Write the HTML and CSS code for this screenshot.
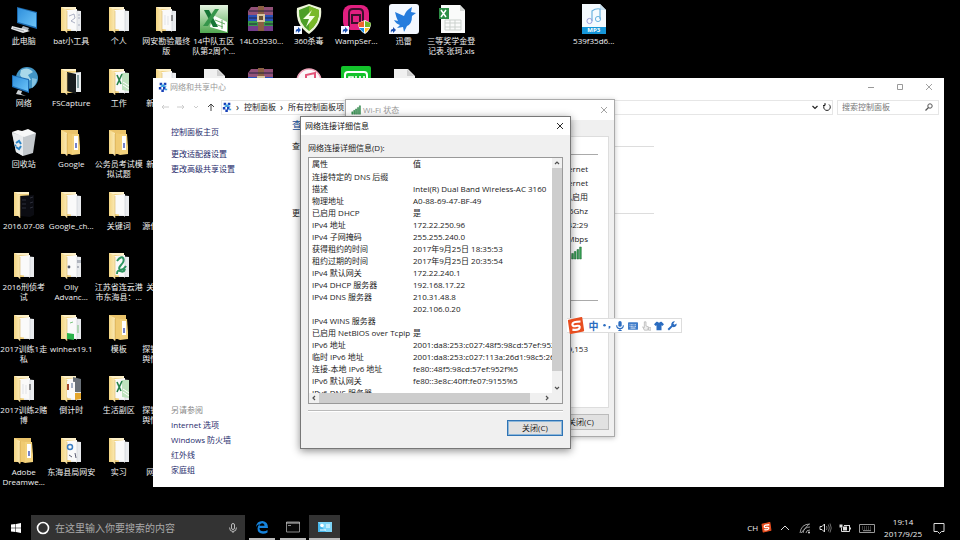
FILE: index.html
```html
<!DOCTYPE html>
<html lang="zh-CN">
<head>
<meta charset="utf-8">
<title>网络连接详细信息</title>
<link rel="stylesheet" href="styles.css">
</head>
<body>
<svg class="sprite" aria-hidden="true">
  <defs>
    <linearGradient id="g-folder" x1="0" x2="1"><stop offset="0" stop-color="#f3d583"/><stop offset="1" stop-color="#fbe9b3"/></linearGradient>
    <linearGradient id="g-blue" x1="0" x2="1" y2="1"><stop offset="0" stop-color="#2f8fdc"/><stop offset="1" stop-color="#6cc4f8"/></linearGradient>
    <linearGradient id="g-green" x1="0" x2="0" y2="1"><stop offset="0" stop-color="#e4f3e0"/><stop offset="1" stop-color="#4fa64f"/></linearGradient>
  </defs>
  <symbol id="folder-back" viewBox="0 0 32 32"><path d="M6 4h15v24H6z" fill="#f0d07c"/><path d="M7 4h14v2H7z" fill="#fdf0c8"/></symbol>
  <symbol id="folder-front" viewBox="0 0 32 32"><path d="M6 4l6 3v23l-2-2-4-1z" fill="url(#g-folder)"/><path d="M12 8v22" stroke="#d9b765" stroke-width=".6"/></symbol>
  <symbol id="folder" viewBox="0 0 32 32"><use href="#folder-back"/><path d="M16 7l10 1v20l-10 0z" fill="#e9ebee"/><path d="M12 7l10-1v23l-2-2-8-1z" fill="#fafafa"/><path d="M22 8v20" stroke="#c9cdd3" stroke-width=".6"/><use href="#folder-front"/></symbol>
  <symbol id="folder-doc" viewBox="0 0 32 32"><use href="#folder"/><path d="M14 13l5-2 1 4-4 3 4 2M23 12h2m-2 3h2m-2 7h2" stroke="#8d93ad" stroke-width=".7" fill="none"/></symbol>
  <symbol id="folder-text" viewBox="0 0 32 32"><use href="#folder"/><path d="M22 12v6" stroke="#333" stroke-width="1"/><path d="M15 12v10m3-9v9" stroke="#d5d8de" stroke-width=".7"/></symbol>
  <symbol id="folder-dark" viewBox="0 0 32 32"><use href="#folder-back"/><path d="M15 8l11-1v20H15z" fill="#eaeef0"/><path d="M12 7l9 2v20l-9-3z" fill="#161a1c"/><path d="M23 10v13" stroke="#729094" stroke-width="1.6"/><use href="#folder-front"/></symbol>
  <symbol id="folder-black" viewBox="0 0 32 32"><use href="#folder-back"/><path d="M12 8l14-1v20l-4 2-10-1z" fill="#0b0c12"/><path d="M14 12h4m-4 4h4m-4 4h4m4-10l3-1m-3 6l3-1m-3 6l3-1" stroke="#363846" stroke-width=".8"/><use href="#folder-front"/></symbol>
  <symbol id="folder-excel" viewBox="0 0 32 32"><use href="#folder"/><path d="M19 8h7v18l-7-1z" fill="#bfe3bf"/><path d="M14 10l4 9m1-10l-5 11" stroke="#27824a" stroke-width="1.600"/><path d="M20 17l6 4m-6-1l6 4" stroke="#fff" stroke-width="1"/></symbol>
  <symbol id="folder-swirl" viewBox="0 0 32 32"><use href="#folder"/><path d="M14 12c6-8 9-1 4 4s1 7 5 1M14 25c0-8 6 2 8-5" stroke="#2f9561" stroke-width="2" fill="none"/></symbol>
  <symbol id="folder-sub" viewBox="0 0 32 32"><path d="M6 4h17v24H6z" fill="#eac36a"/><path d="M17 8h7l1 13v7l-8 1z" fill="#f3d27c"/><path d="M19 10h4v14h-4z" fill="#fff"/><path d="M21 17v5" stroke="#5365be" stroke-width="1.600"/><path d="M12 7l5 1v21l-5-2z" fill="#f0cb72"/><path d="M12 7v22" stroke="#dcb04f"/><use href="#folder-front"/></symbol>
  <symbol id="folder-gear" viewBox="0 0 32 32"><use href="#folder"/><circle cx="14" cy="18" r="1.4" fill="#555c6d"/><path d="M23 11v3m0 3v2m2-8v3" stroke="#7a8190"/></symbol>
  <symbol id="folder-green" viewBox="0 0 32 32"><use href="#folder"/><path d="M12 22l7 1v6l-7-1z" fill="#2bb34b"/><path d="M15 12l3-1m5 3v8" stroke="#7cc47f"/></symbol>
  <symbol id="folder-photo" viewBox="0 0 32 32"><use href="#folder"/><path d="M18 5l8 2v13h-8z" fill="#697078"/><path d="M20 21h6v6l-6 1z" fill="#e4a52b"/><path d="M12 9l8 1v17l-8-2z" fill="#fafafa"/><path d="M13 12v6" stroke="#a1452b" stroke-width="2"/><path d="M17 11v5" stroke="#526a90"/></symbol>
  <symbol id="folder-blue" viewBox="0 0 32 32"><use href="#folder"/><circle cx="15" cy="13" r="2.5" fill="none" stroke="#3c7fc4" stroke-width="1.5"/><path d="M14 21l3 2m3-4l1 5" stroke="#5d5f75"/></symbol>
  <symbol id="pc" viewBox="0 0 32 32"><path d="M9 4l20 5v17L9 20z" fill="#1c69ad"/><path d="M10 5l18 5v14l-18-5z" fill="url(#g-blue)"/><path d="M15 23l6 2-2 4-6-3z" fill="#aeb4ba"/><path d="M4 23l12 3 6 2-7 2L3 26z" fill="#e5e7e9"/><path d="M5 25l11 3" stroke="#9ba0a5"/></symbol>
  <symbol id="net" viewBox="0 0 32 32"><circle cx="19" cy="13" r="11" fill="#4395c5"/><path d="M13 5q7-4 12 2l-5 3 3 5-7 1-4-6z" fill="#a9d8ea"/><path d="M24 13l5 1q-1 6-5 9z" fill="#83c2e1"/><path d="M4 10l17 4v14L4 22z" fill="#1d6db5"/><path d="M5 11l15 4v11L5 21z" fill="url(#g-blue)"/><path d="M10 25l4 1-1 3 5 2-10-2z" fill="#ccd2d6"/></symbol>
  <symbol id="bin" viewBox="0 0 32 32"><path d="M4 6l24 1-3 20-10 3-7-4z" fill="#c3c8cc"/><path d="M4 7l11 3v20l-7-4z" fill="#e8ebed"/><path d="M4 6l6-2 4 1 6-2 8 4-12 4z" fill="#f7f8f8"/><path d="M8 17l3-2 2 3m0 2l-2 3-3-2m0-2l-1 1" stroke="#2984c6" stroke-width="2" fill="none"/></symbol>
  <symbol id="xls-big" viewBox="0 0 32 32"><path d="M2 2h28v28H2z" fill="url(#g-green)"/><path d="M15 12l14 7v10l-17-5z" fill="#fff"/><path d="M17 17l10 4m-10 0l8 3m-1-7v9" stroke="#65ac65"/><path d="M6 7h5l9 17h-5z" fill="#167536"/><path d="M17 6h4L10 23H5z" fill="#36954b"/></symbol>
  <symbol id="rar" viewBox="0 0 32 32"><path d="M3 8l3-4h22v8H3z" fill="#935178"/><path d="M3 12h25v6H3z" fill="#2850b8"/><path d="M3 18h25v6H3z" fill="#39984a"/><path d="M3 23h25v5H3z" fill="#723d8c"/><path d="M13 3h6v25h-6z" fill="#8b6043"/><path d="M12 11h8v8h-8z" fill="#d7c4a0"/><path d="M14 13h4v4h-4z" fill="#665033"/><path d="M4 8h24M4 15h8m8 0h8M4 21h8m8 0h8" stroke="#222241"/></symbol>
  <symbol id="link" viewBox="0 0 32 32"><path d="M1 23h8v8H1z" fill="#f5f8ff"/><path d="M3 30q-1-4 2-4v-2l3 3-3 3v-2q-2 0-2 2" fill="#184eb0"/></symbol>
  <symbol id="safe" viewBox="0 0 32 32"><path d="M16 1l12 4q2 16-12 26Q2 22 4 5z" fill="#eef6d9"/><path d="M16 3l10 4q1 13-10 21Q5 20 6 7z" fill="#4d9f27"/><path d="M16 3l10 4q1 13-10 21z" fill="#79b928"/><path d="M19 7l-9 9h6l-3 8 9-11h-6z" fill="#f7ffe7"/><use href="#link"/></symbol>
  <symbol id="wamp" viewBox="0 0 32 32"><rect x="3" y="2" width="26" height="25" rx="8" fill="#e21f80"/><path d="M9 24V10q0-4 4-4h6q4 0 4 4v14M12 15v-3h8v8h-8z" fill="none" stroke="#39102b" stroke-width="2"/><path d="M25 17l6 3q0 7-6 11-7-4-7-11z" fill="#fff"/><path d="M24 18v6h-5l-1-4z" fill="#ef652f"/><path d="M25 18l6 2-1 4h-5z" fill="#70b82b"/><path d="M19 25h5v5z" fill="#168ce2"/><path d="M25 25h5l-5 5z" fill="#ffc12e"/><use href="#link"/></symbol>
  <symbol id="thunder" viewBox="0 0 32 32"><rect x="1" y="1" width="30" height="30" rx="3" fill="#f3f8ff"/><path d="M7 9l9 4Q18 7 24 4l-1 5 5 1-4 3q0 8-5 10l-3 6-1-5-6 1 3-3q-4-1-6-5l4 1Q8 14 7 9z" fill="#257cdd"/><use href="#link"/></symbol>
  <symbol id="xls" viewBox="0 0 32 32"><path d="M6 2h19l5 5v23H6z" fill="#fafbfa"/><path d="M25 2v6h5" fill="#d4d7d5"/><path d="M10 17h16v10H10zM10 20h16m-16 4h16m-11-7v10m5-10v10" fill="none" stroke="#cbd1cd"/><path d="M4 5h10v11H4z" fill="#2d8e46"/><path d="M6 7l5 7m0-7l-5 7" stroke="#fff" stroke-width="1.5"/></symbol>
  <symbol id="file" viewBox="0 0 32 32"><path d="M6 4h14l7 7v20H6z" fill="#f0f0f0"/><path d="M19 4v7h7" fill="#cfcfcf"/></symbol>
  <symbol id="itunes" viewBox="0 0 32 32"><circle cx="16" cy="16" r="12" fill="#faf8fa" stroke="#f0a5bb" stroke-width="1.500"/><path d="M13 22V10l9-2v12" stroke="#e35479" stroke-width="2" fill="none"/></symbol>
  <symbol id="iqiyi" viewBox="0 0 32 32"><rect x="1" y="1" width="30" height="31" rx="2" fill="#13c32b"/><rect x="5" y="7" width="22" height="20" rx="3" fill="none" stroke="#fff" stroke-width="2"/><path d="M9 12h4v5H9zm7-1v7m4-7v6h4v-6" fill="none" stroke="#fff" stroke-width="1.6"/></symbol>
  <symbol id="mp3" viewBox="0 0 32 32"><path d="M4 1h18l6 6v24H4z" fill="#f4fafe"/><path d="M22 1v6h6" fill="#c9dfee"/><path d="M4 24h24v7H4z" fill="#1696d8"/><path d="M14 18V8q4-3 8-2v10" fill="none" stroke="#6bb4e0" stroke-width="1.2"/><circle cx="11.500" cy="18" r="2.6" fill="none" stroke="#999edb"/><circle cx="20" cy="16" r="2.6" fill="none" stroke="#6bb4e0"/></symbol>
  <symbol id="center" viewBox="0 0 12 12"><path d="M2 1h3v3H2zM7 1h3v3H7zM1 6h3v3H1zM6 6h3v3H6zM4 9h3v3H4z" fill="#1740b8"/><path d="M4 3h4v2H4zM3 5h7v1H3zM8 8h3v2H8z" fill="#3ca1e2"/></symbol>
  <symbol id="signal" viewBox="0 0 14 14"><path d="M1 13V9.500h1.700V13zM3.700 13V7.500h1.700V13zM6.300 13V5.500H8V13zM9 13V3.500h1.700V13zM11.600 13V1h1.700v12z" fill="#39a457" stroke="#1c6734" stroke-width=".5"/></symbol>
  <symbol id="close" viewBox="0 0 10 10"><path d="M2 2l6 6m0-6L2 8" fill="none" stroke="currentColor" stroke-width=".9"/></symbol>
  <symbol id="sogou" viewBox="0 0 20 20"><path d="M2 4l14-3 2 14-14 3z" fill="#e84e20" stroke="#e84e20" stroke-width="2" stroke-linejoin="round"/><path d="M15 5q-9 0-9 3t4 2q5-1 4 2t-8 2" fill="none" stroke="#fff" stroke-width="2.4"/></symbol>
  <symbol id="up" viewBox="0 0 10 10"><path d="M3 6l2-2 2 2" fill="none" stroke="#505050" stroke-width="1.2"/></symbol>
</svg>

<main class="screen">
  <div class="desktop">
    <ul class="column">
      <li class="item"><svg class="icon"><use href="#pc"/></svg><span>此电脑</span></li>
      <li class="item"><svg class="icon"><use href="#net"/></svg><span>网络</span></li>
      <li class="item"><svg class="icon"><use href="#bin"/></svg><span>回收站</span></li>
      <li class="item"><svg class="icon"><use href="#folder-black"/></svg><span>2016.07-08</span></li>
      <li class="item"><svg class="icon"><use href="#folder"/></svg><span>2016刑侦考<br>试</span></li>
      <li class="item"><svg class="icon"><use href="#folder"/></svg><span>2017训练1走<br>私</span></li>
      <li class="item"><svg class="icon"><use href="#folder-text"/></svg><span>2017训练2赌<br>博</span></li>
      <li class="item"><svg class="icon"><use href="#folder-sub"/></svg><span>Adobe<br>Dreamwe...</span></li>
    </ul>
    <ul class="column">
      <li class="item"><svg class="icon"><use href="#folder-doc"/></svg><span>bat小工具</span></li>
      <li class="item"><svg class="icon"><use href="#folder-dark"/></svg><span>FSCapture</span></li>
      <li class="item"><svg class="icon"><use href="#folder-sub"/></svg><span>Google</span></li>
      <li class="item"><svg class="icon"><use href="#folder"/></svg><span>Google_ch...</span></li>
      <li class="item"><svg class="icon"><use href="#folder-gear"/></svg><span>Olly<br>Advanc...</span></li>
      <li class="item"><svg class="icon"><use href="#folder-green"/></svg><span>winhex19.1</span></li>
      <li class="item"><svg class="icon"><use href="#folder-photo"/></svg><span>倒计时</span></li>
      <li class="item"><svg class="icon"><use href="#folder-blue"/></svg><span>东海县局网安</span></li>
    </ul>
    <ul class="column">
      <li class="item"><svg class="icon"><use href="#folder"/></svg><span>个人</span></li>
      <li class="item"><svg class="icon"><use href="#folder-excel"/></svg><span>工作</span></li>
      <li class="item"><svg class="icon"><use href="#folder-sub"/></svg><span>公务员考试模<br>拟试题</span></li>
      <li class="item"><svg class="icon"><use href="#folder"/></svg><span>关键词</span></li>
      <li class="item"><svg class="icon"><use href="#folder-swirl"/></svg><span>江苏省连云港<br>市东海县：...</span></li>
      <li class="item"><svg class="icon"><use href="#folder-sub"/></svg><span>模板</span></li>
      <li class="item"><svg class="icon"><use href="#folder-excel"/></svg><span>生活副区</span></li>
      <li class="item"><svg class="icon"><use href="#folder"/></svg><span>实习</span></li>
    </ul>
    <ul class="column">
      <li class="item"><svg class="icon"><use href="#folder-text"/></svg><span>网安勘验最终<br>版</span></li>
      <li class="item"><svg class="icon"><use href="#folder"/></svg><span>新建文件夹</span></li>
      <li class="item"><svg class="icon"><use href="#folder"/></svg><span>新建文件夹</span></li>
      <li class="item"><svg class="icon"><use href="#folder"/></svg><span>源代码文件夹</span></li>
      <li class="item"><svg class="icon"><use href="#folder"/></svg><span>关键词文件</span></li>
      <li class="item"><svg class="icon"><use href="#folder"/></svg><span>探针数据采集<br>舆情数据采集</span></li>
      <li class="item"><svg class="icon"><use href="#folder"/></svg><span>探针数据采集<br>舆情数据采集</span></li>
      <li class="item"><svg class="icon"><use href="#folder"/></svg><span>网安文件夹</span></li>
    </ul>
    <ul class="column">
      <li class="item"><svg class="icon"><use href="#xls-big"/></svg><span>14中队五区<br>队第2周个...</span></li>
      <li class="item"><svg class="icon"><use href="#file"/></svg></li>
    </ul>
    <ul class="column">
      <li class="item"><svg class="icon"><use href="#rar"/></svg><span>14LO3530...</span></li>
      <li class="item"><svg class="icon"><use href="#rar"/></svg></li>
    </ul>
    <ul class="column">
      <li class="item"><svg class="icon"><use href="#safe"/></svg><span>360杀毒</span></li>
      <li class="item"><svg class="icon"><use href="#itunes"/></svg></li>
    </ul>
    <ul class="column">
      <li class="item"><svg class="icon"><use href="#wamp"/></svg><span>WampSer...</span></li>
      <li class="item"><svg class="icon"><use href="#iqiyi"/></svg></li>
    </ul>
    <ul class="column">
      <li class="item"><svg class="icon"><use href="#thunder"/></svg><span>迅雷</span></li>
      <li class="item"><svg class="icon"><use href="#file"/></svg></li>
    </ul>
    <ul class="column">
      <li class="item"><svg class="icon"><use href="#xls"/></svg><span>三等奖学金登<br>记表-张珂.xls</span></li>
    </ul>
    <ul class="column column-far">
      <li class="item"><span class="icon mp3"><svg class="icon"><use href="#mp3"/></svg><b>MP3</b></span><span>539f35d6...</span></li>
    </ul>
  </div>

  <section class="window center-window">
    <header class="titlebar inactive">
      <svg class="app-icon"><use href="#center"/></svg>
      <h1>网络和共享中心</h1>
      <div class="caption-buttons">
        <button type="button" aria-label="最小化"><svg viewBox="0 0 10 10"><path d="M2 5.500h6" stroke="currentColor"/></svg></button>
        <button type="button" aria-label="最大化"><svg viewBox="0 0 10 10"><path d="M2.500 2.500h5v5h-5z" fill="none" stroke="currentColor"/></svg></button>
        <button type="button" aria-label="关闭"><svg><use href="#close"/></svg></button>
      </div>
    </header>
    <nav class="toolbar">
      <button type="button" class="faint" aria-label="后退"><svg viewBox="0 0 10 10"><path d="M9 5H2m2-2L2 5l2 2" fill="none" stroke="currentColor"/></svg></button>
      <button type="button" class="faint" aria-label="前进"><svg viewBox="0 0 10 10"><path d="M1 5h7M6 3l2 2-2 2" fill="none" stroke="currentColor"/></svg></button>
      <button type="button" class="faint narrow" aria-label="最近位置"><svg viewBox="0 0 10 10"><path d="M3 4l2 2 2-2" fill="none" stroke="currentColor"/></svg></button>
      <button type="button" aria-label="向上"><svg viewBox="0 0 10 10"><path d="M5 9V2M2 5l3-3 3 3" fill="none" stroke="currentColor"/></svg></button>
      <div class="address">
        <svg class="crumb-icon"><use href="#center"/></svg>
        <i>›</i><a href="#">控制面板</a><i>›</i><a href="#">所有控制面板项</a>
        <div class="address-end">
          <button type="button" aria-label="展开"><svg viewBox="0 0 10 10"><path d="M2.500 4L5 6.500 7.500 4" fill="none" stroke="currentColor" stroke-width="1.200"/></svg></button>
          <button type="button" aria-label="刷新"><svg viewBox="0 0 10 10"><path d="M7 2.500a3.300 3.300 0 1 1-4 0M3 1v2.500H1" fill="none" stroke="currentColor"/></svg></button>
        </div>
      </div>
      <div class="search-box">
        <input type="search" placeholder="搜索控制面板" aria-label="搜索控制面板">
        <svg viewBox="0 0 10 10"><path d="M1.500 8.500l3-3" stroke="#555" stroke-width="1.300"/><circle cx="6" cy="4" r="2.200" fill="none" stroke="#555"/></svg>
      </div>
    </nav>
    <div class="center-body">
      <aside class="sidebar">
        <a href="#" class="home">控制面板主页</a>
        <a href="#">更改适配器设置</a>
        <a href="#">更改高级共享设置</a>
        <p>另请参阅</p>
        <a href="#">Internet 选项</a>
        <a href="#">Windows 防火墙</a>
        <a href="#">红外线</a>
        <a href="#">家庭组</a>
      </aside>
      <div class="content">
        <h2>查看网络信息</h2>
        <h3 class="networks">查看活动网络</h3>
        <h3>更改网络设置</h3>
      </div>
    </div>
  </section>

  <section class="window status-window">
    <header class="titlebar inactive">
      <svg class="app-icon"><use href="#signal"/></svg>
      <h1>Wi-Fi 状态</h1>
      <div class="caption-buttons"><button type="button" aria-label="关闭"><svg><use href="#close"/></svg></button></div>
    </header>
    <div class="status-body">
      <div class="tab-page">
        <div class="group connection">
          <p>Internet</p><p>Internet</p><p>已启用</p><p>5Ghz</p><p>02:42:29</p><p>Mbps</p>
          <svg class="signal"><use href="#signal"/></svg>
        </div>
        <div class="group activity"><p>9,153</p></div>
      </div>
      <div class="actions"><button type="button" class="push">关闭(C)</button></div>
    </div>
  </section>

  <section class="window details-window">
    <header class="titlebar">
      <h1>网络连接详细信息</h1>
      <div class="caption-buttons"><button type="button" aria-label="关闭"><svg><use href="#close"/></svg></button></div>
    </header>
    <div class="details-body">
      <p class="list-label" id="list-label">网络连接详细信息(D):</p>
      <div class="list">
        <div class="list-view">
          <table aria-labelledby="list-label">
            <thead><tr><th>属性</th><th>值</th></tr></thead>
            <tbody>
              <tr><td>连接特定的 DNS 后缀</td><td></td></tr>
              <tr><td>描述</td><td>Intel(R) Dual Band Wireless-AC 3160</td></tr>
              <tr><td>物理地址</td><td>A0-88-69-47-BF-49</td></tr>
              <tr><td>已启用 DHCP</td><td>是</td></tr>
              <tr><td>IPv4 地址</td><td>172.22.250.96</td></tr>
              <tr><td>IPv4 子网掩码</td><td>255.255.240.0</td></tr>
              <tr><td>获得租约的时间</td><td>2017年9月25日 18:35:53</td></tr>
              <tr><td>租约过期的时间</td><td>2017年9月25日 20:35:54</td></tr>
              <tr><td>IPv4 默认网关</td><td>172.22.240.1</td></tr>
              <tr><td>IPv4 DHCP 服务器</td><td>192.168.17.22</td></tr>
              <tr><td>IPv4 DNS 服务器</td><td>210.31.48.8</td></tr>
              <tr><td></td><td>202.106.0.20</td></tr>
              <tr><td>IPv4 WINS 服务器</td><td></td></tr>
              <tr><td>已启用 NetBIOS over Tcpip</td><td>是</td></tr>
              <tr><td>IPv6 地址</td><td>2001:da8:253:c027:48f5:98cd:57ef:952f</td></tr>
              <tr><td>临时 IPv6 地址</td><td>2001:da8:253:c027:113a:26d1:98c5:26</td></tr>
              <tr><td>连接-本地 IPv6 地址</td><td>fe80::48f5:98cd:57ef:952f%5</td></tr>
              <tr><td>IPv6 默认网关</td><td>fe80::3e8c:40ff:fe07:9155%5</td></tr>
              <tr><td>IPv6 DNS 服务器</td><td></td></tr>
            </tbody>
          </table>
        </div>
        <div class="scroll scroll-y"><svg><use href="#up"/></svg><span></span><svg class="down"><use href="#up"/></svg></div>
        <div class="scroll scroll-x"><svg class="left"><use href="#up"/></svg><span></span><svg class="right"><use href="#up"/></svg></div>
        <div class="scroll"></div>
      </div>
      <hr>
      <div class="actions"><button type="button" class="push default">关闭(C)</button></div>
    </div>
  </section>

  <div class="ime">
    <svg class="ime-logo"><use href="#sogou"/></svg>
    <b>中</b>
    <svg viewBox="0 0 12 12"><circle cx="3" cy="5" r="1.500" fill="#2b6cc0"/><path d="M8 6h2v2L8 10z" fill="#2b6cc0"/></svg>
    <svg viewBox="0 0 12 12"><rect x="4" y="0" width="4" height="7" rx="2" fill="#2b6cc0"/><path d="M2 5q0 4 4 4t4-4M6 9v2M4 11.500h4" fill="none" stroke="#2b6cc0" stroke-width="1.300"/></svg>
    <svg viewBox="0 0 12 12"><rect x="0" y="1.500" width="12" height="9" rx="1" fill="#3f7cc9"/><path d="M2 4.500h8M2 6.500h8" stroke="#fff" stroke-dasharray="1 .6"/><path d="M3 8.500h6" stroke="#fff"/></svg>
    <svg viewBox="0 0 12 12"><path d="M4 1v7L2 7l2 4h4l1-4-3-1V1zM9 8h3v3H9z" fill="#eee" stroke="#bbb"/></svg>
    <svg viewBox="0 0 12 12"><path d="M3 1h1q2 2 4 0h1l3 3-2 2-1-1v6H3V5L2 6 0 4z" fill="#2b6cc0"/></svg>
    <svg viewBox="0 0 12 12"><path d="M1.500 10.500l5-5" stroke="#2b6cc0" stroke-width="2.400"/><path d="M9.500.5L7.500 3l1.500 1.500L11.500 3q.5 4-3.500 4.500Q5 7 5 4q1-4 4.500-3.500" fill="#2b6cc0"/></svg>
  </div>

  <footer class="taskbar">
    <button type="button" class="start" aria-label="开始"><svg viewBox="0 0 12 12"><path d="M1 2.500L5.500 2v3.700H1zM6 1.900L11 1v4.700H6zM1 6.300h4.500V10L1 9.500zM6 6.300h5V11l-5-.9z" fill="#fff"/></svg></button>
    <div class="cortana">
      <svg viewBox="0 0 14 14"><circle cx="7" cy="7" r="5.500" fill="none" stroke="#fff" stroke-width="1.600"/></svg>
      <input type="text" placeholder="在这里输入你要搜索的内容" aria-label="搜索">
      <svg viewBox="0 0 14 14"><rect x="5.500" y="2.500" width="3" height="6" rx="1.500" fill="none" stroke="#bbb"/><path d="M3.500 6.500q0 4 3.500 4t3.500-4M7 10.500V12" fill="none" stroke="#bbb"/></svg>
    </div>
    <button type="button" class="task" aria-label="Edge"><svg viewBox="0 0 16 16"><path d="M2 8Q2.500 2 8.500 2 14 2.500 14 9H5.500q0 3.500 4 3.300 2.500 0 4-1.200V13.500q-2 1.200-4.500 1.200Q3.500 14.500 3.500 9.500q0-3 2.500-4.500Q3 5.500 2 8zm3.500-1.300h5Q10.500 4.200 8 4.200 6 4.200 5.500 6.700z" fill="#1683dc"/></svg></button>
    <button type="button" class="task" aria-label="命令提示符"><svg viewBox="0 0 16 16"><path d="M1.500 3h13v10h-13z" fill="#080808" stroke="#888"/><path d="M1 4h14" stroke="#ccc"/><path d="M3 6.500h3" stroke="#888"/></svg></button>
    <button type="button" class="task current" aria-label="控制面板"><svg viewBox="0 0 16 16"><path d="M1 3h14v10H1z" fill="#44b5ea"/><path d="M1 3h14v10H9z" fill="#7dd4f7"/><circle cx="5" cy="6.500" r="1.800" fill="#fff"/><path d="M9 6h4M9 8h4M3 11h6" stroke="#fff"/></svg></button>
    <div class="tray">
      <span class="lang">CH</span>
      <svg class="s-logo"><use href="#sogou"/></svg>
      <svg viewBox="0 0 14 14"><path d="M3 9l4-4 4 4" fill="none" stroke="#ddd"/></svg>
      <svg viewBox="0 0 14 14"><path d="M2 12Q3 3 12 3M5 12q1-6 7-6M8 12q0-3 4-3M3 12L11 3" fill="none" stroke="#aaa" stroke-width=".9"/><circle cx="11" cy="11.500" r="1" fill="#ddd"/></svg>
      <svg viewBox="0 0 14 14"><path d="M2 5.500h2L6.500 3v8L4 8.500H2z" fill="none" stroke="#ddd"/><path d="M8.500 5q1 2 0 4m1.800-5.500q2 3.500 0 7M12 2.500q2.500 4.500 0 9" fill="none" stroke="#888" stroke-width=".8"/></svg>
      <svg viewBox="0 0 14 14"><path d="M5 5.500h4v4H5z" fill="#ddd"/><path d="M11.500 4.500v6h-8v-4M6 4.500h6" fill="none" stroke="#ddd"/><path d="M12.500 6.500v2" stroke="#ddd"/><path d="M1.500 3.500h3v3h-3z" fill="#ddd"/></svg>
      <svg class="keyboard" viewBox="0 0 18 14"><path d="M1.500 3.500h15v8h-15z" fill="none" stroke="#999"/><path d="M4 6h10M4 8h10" stroke="#777" stroke-dasharray="1 1"/><path d="M5 9.700h8" stroke="#999"/></svg>
      <time datetime="2017-09-25T19:14"><span>19:14</span><span>2017/9/25</span></time>
      <svg class="notice" viewBox="0 0 14 14"><path d="M2 2.500h10v8H9.500L7.500 12.500l-2-2H2z" fill="none" stroke="#ddd"/></svg>
    </div>
  </footer>
</main>
</body>
</html>
```

FILE: styles.css
```css
* { box-sizing: border-box; }

body {
  margin: 0;
  background: #000;
  font: 8px/12px "Open Sans", "Noto Sans CJK SC", sans-serif;
  color: #1a1a1a;
}

h1, h2, h3, p, ul { margin: 0; padding: 0; font-size: inherit; font-weight: normal; }
button, input { font: inherit; color: inherit; background: none; border: 0; padding: 0; margin: 0; }
a { color: inherit; text-decoration: none; }
svg { display: block; flex: none; }
.sprite { position: absolute; width: 0; height: 0; }

.screen {
  position: relative;
  display: flex;
  flex-direction: column;
  height: 100vh;
  min-height: 520px;
  overflow: hidden;
}

/* Desktop icons */
.desktop {
  flex: 1;
  display: grid;
  grid-template-columns: repeat(20, 1fr);
  padding: 0 10px 23px 0;
}
.column { display: grid; grid-template-rows: repeat(8, 1fr); list-style: none; min-width: 0; }
.column-far { grid-column: 13; }
.item {
  display: flex;
  flex-direction: column;
  align-items: center;
  gap: 1px;
  min-width: 0;
  padding-top: 3px;
  line-height: 10px;
  text-align: center;
  white-space: nowrap;
  color: #f2f2f2;
}
.icon { width: 32px; height: 32px; flex: none; }
.mp3 { position: relative; }
.mp3 b { position: absolute; left: 0; right: 0; bottom: 1px; font-size: 6px; line-height: 7px; color: #fff; }

/* Windows */
.window { position: absolute; display: flex; flex-direction: column; background: #fff; }
.titlebar { display: flex; align-items: center; height: 18px; padding-left: 5px; background: #fff; }
.titlebar.inactive { color: #999; }
.app-icon { width: 10px; height: 10px; margin-right: 2px; }
.caption-buttons { display: flex; margin-left: auto; }
.caption-buttons button { display: grid; place-items: center; width: 29px; height: 18px; }
.caption-buttons svg { width: 10px; height: 10px; }

.center-window { left: 153px; right: 16px; top: 78px; bottom: 53px; }
.center-window .titlebar { padding-right: 1px; }
.toolbar { display: flex; align-items: center; gap: 4px; height: 22px; padding: 0 5px 0 6px; color: #444; }
.toolbar > button { width: 12px; }
.toolbar > button svg { width: 10px; height: 10px; margin: auto; }
.toolbar > .narrow { width: 10px; }
.toolbar > .faint { color: #ccc; }
.address { flex: 1; display: flex; align-items: center; height: 15px; border: 1px solid #e6e6e6; color: #222; }
.crumb-icon { width: 10px; height: 10px; }
.address i { width: 13px; margin-left: -1px; text-align: center; font-style: normal; font-size: 10px; }
.address-end { display: flex; gap: 2px; margin-left: auto; }
.address-end svg, .search-box svg { width: 10px; height: 10px; }
.search-box { display: flex; align-items: center; width: 102px; height: 15px; padding: 0 4px; border: 1px solid #e6e6e6; }
.search-box input { flex: 1; min-width: 0; outline: 0; }
.search-box input::placeholder { color: #777; opacity: 1; }

.center-body { flex: 1; display: flex; min-height: 0; }
.sidebar { display: flex; flex-direction: column; width: 139px; padding: 6px 0 10px 18px; line-height: 15px; color: #1e2a6b; }
.sidebar .home { margin-bottom: 7px; }
.sidebar p { margin-top: auto; color: #888; }
.content { width: 362px; }
.content h2 { font-size: 10px; line-height: 14px; color: #174f9c; }
.content h3 { display: flex; align-items: center; gap: 8px; line-height: 12px; margin-top: 55px; }
.content .networks { margin-top: 8px; }
.content h3::after { content: ""; flex: 1; border-top: 1px solid #ddd; }

.status-window {
  left: 345px; top: 99px; width: 270px;
  border: 1px solid #aaa;
  box-shadow: 0 1px 5px rgba(0, 0, 0, .25);
  background: #f0f0f0;
}
.status-window .caption-buttons button, .details-window .caption-buttons button { width: 21px; }
.status-body { padding: 16px 5px 6px 6px; }
.status-window .titlebar { height: 20px; }
.tab-page { height: 272px; padding: 17px 10px 0; border: 1px solid #ddd; background: #fff; }
.group { border-top: 1px solid #aaa; padding-right: 10px; text-align: right; }
.connection { display: flex; flex-direction: column; height: 146px; padding-top: 7px; line-height: 14px; }
.signal { width: 14px; height: 14px; margin: 0 6px 0 auto; }
.activity { padding-top: 42px; }
.actions { display: flex; justify-content: flex-end; }
.status-window .actions { padding-top: 6px; }
.push { width: 56px; height: 16px; border: 1px solid #bbb; background: #e1e1e1; line-height: 12px; }
.push.default { border: 1px solid #2f74b5; outline: 1px solid #8db7da; outline-offset: -2px; }

.details-window {
  left: 300px; top: 116px; width: 271px;
  border: 1px solid #777;
  box-shadow: 0 2px 8px rgba(0, 0, 0, .45);
  background: #f0f0f0;
}
.details-window .titlebar { padding-left: 4px; color: #111; }
.details-body { padding: 7px 7px 12px; }
.list-label { padding-bottom: 3px; }
.list {
  display: grid;
  grid-template-columns: 1fr 10px;
  grid-template-rows: 1fr 10px;
  height: 247px;
  border: 1px solid #999;
  background: #fff;
}
.list-view { overflow: hidden; min-width: 0; min-height: 0; padding-left: 3px; }
table { border-collapse: collapse; table-layout: fixed; width: 260px; }
th, td { height: 12px; padding: 0; line-height: 12px; font-weight: normal; text-align: left; white-space: nowrap; }
th { height: 13px; vertical-align: top; }
th:first-child { width: 101px; }
.scroll { display: flex; background: #f0f0f0; }
.scroll svg { width: 10px; height: 10px; }
.scroll span { background: #cdcdcd; }
.scroll-y { flex-direction: column; justify-content: space-between; }
.scroll-y span { flex: 1; margin-bottom: 12px; }
.scroll-x span { flex: 1; margin-right: 12px; }
.down { transform: rotate(180deg); }
.left { transform: rotate(-90deg); }
.right { transform: rotate(90deg); }
hr { margin: 6px 0 8px; border: 0; border-top: 1px solid #bbb; border-bottom: 1px solid #fff; }

/* Input method bar */
.ime {
  position: absolute;
  left: 567px; top: 318px;
  display: flex;
  align-items: center;
  gap: 3px;
  height: 15px;
  padding-right: 4px;
  border: 1px solid #ddd;
  border-left: 0;
  background: #fff;
  color: #2b6cc0;
}
.ime svg { width: 10px; height: 10px; }
.ime .ime-logo { width: 18px; height: 18px; }
.ime b { width: 11px; font-size: 10px; text-align: center; }

/* Taskbar */
.taskbar { display: flex; height: 25px; flex: none; background: #000; color: #eee; }
.start { width: 31px; }
.start svg { width: 12px; height: 12px; margin: auto; }
.cortana { display: flex; align-items: center; gap: 5px; width: 214px; padding: 0 5px; background: #333; }
.cortana svg { width: 14px; height: 14px; }
.cortana input { flex: 1; min-width: 0; font-size: 10px; outline: 0; }
.cortana input::placeholder { color: #aaa; opacity: 1; }
.task { width: 26px; margin-left: 4px; border-bottom: 2px solid #bbb; }
.task + .task { margin-left: 5px; }
.task svg { width: 16px; height: 16px; margin: auto; }
.task.current { width: 31px; margin-left: 3px; background: #333; }
.tray { display: flex; align-items: center; gap: 6px; margin-left: auto; padding-right: 14px; }
.tray svg { width: 14px; height: 14px; }
.tray .s-logo { width: 11px; height: 11px; margin-left: -3px; }
.tray .keyboard { width: 18px; }
.tray time { display: flex; flex-direction: column; text-align: center; margin: 0 4px 0 2px; }
```
